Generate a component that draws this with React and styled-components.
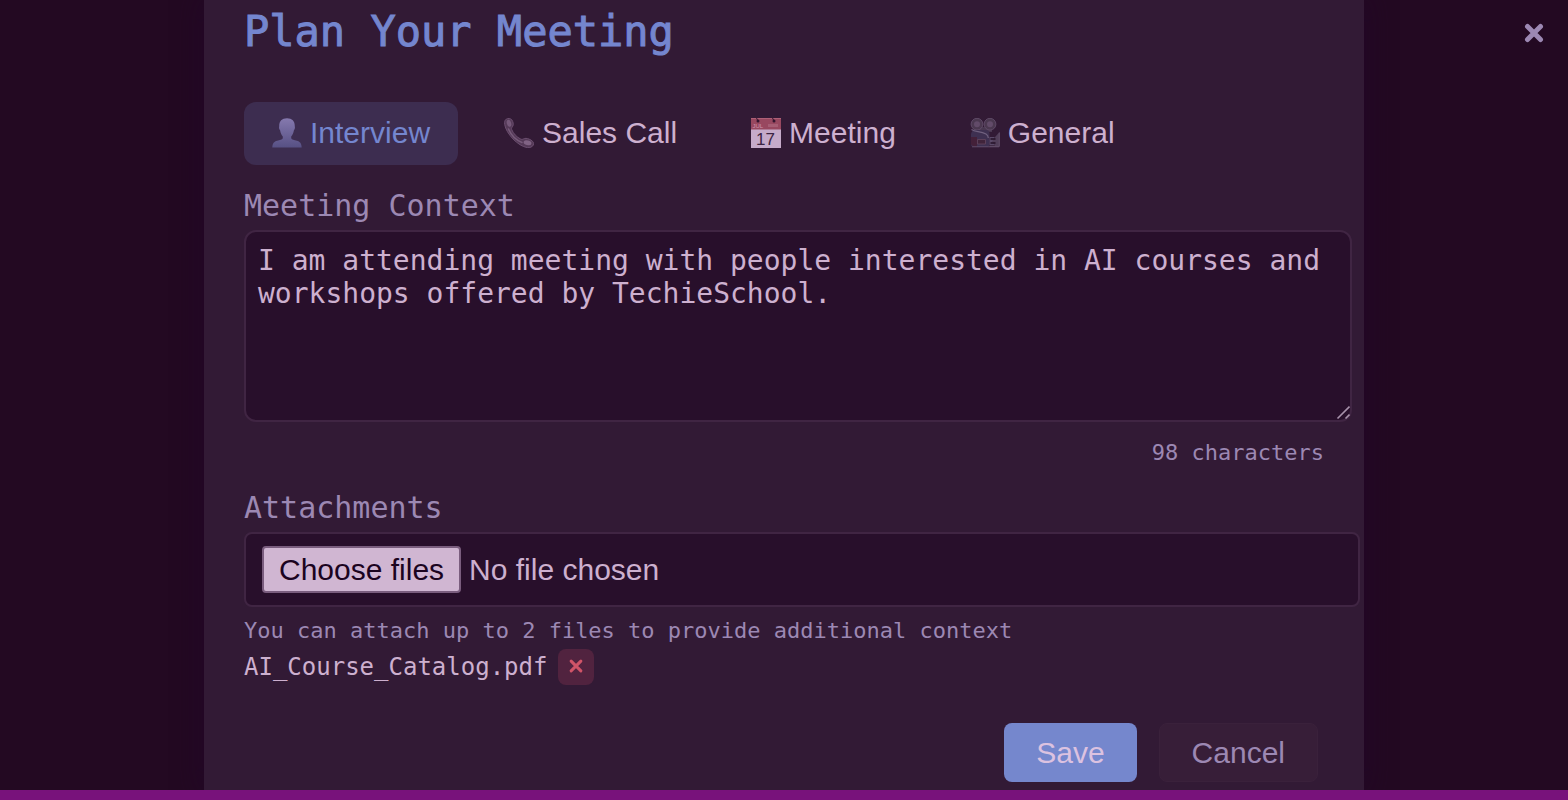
import React, { useState } from 'react';
import styled, { createGlobalStyle } from 'styled-components';

const GlobalStyle = createGlobalStyle`
  body {
    margin: 0;
    background: #230922;
  }
`
const Page = styled.div`
  display: flex;
  flex-direction: column;
  min-height: 100vh;
  box-sizing: border-box;
  border-bottom: 10px solid #78127b;
  font-family: "DejaVu Sans Mono", monospace;
  color: #cdb0cf;
`
const Overlay = styled.div`
  flex: 1;
  display: grid;
  grid-template-columns: 1fr minmax(0, 1160px) 1fr;
  overflow: hidden;
  background: #230922;
`
const Modal = styled.main`
  grid-column: 2;
  padding: 0 40px 8px;
  background: #321a35;
  box-shadow: 0 0 24px #220628;
`
const Close = styled.button`
  justify-self: end;
  align-self: start;
  display: flex;
  margin: 21px 22px 0 0;
  padding: 0;
  border: none;
  background: none;
  color: #9c88b3;
  cursor: pointer;
`
const Title = styled.h1`
  margin: 0 0 42px;
  padding-top: 4px;
  font-size: 42px;
  line-height: 56px;
  font-weight: 400;
  color: #7486cf;
  -webkit-text-stroke: 1px #7486cf;
`
const Tabs = styled.div`
  display: flex;
  flex-wrap: wrap;
  gap: 18px;
  margin-bottom: 20px;
`
const Tab = styled.button`
  display: flex;
  align-items: center;
  gap: 8px;
  height: 63px;
  padding: 0 28px 2px;
  border: none;
  border-radius: 12px;
  background: ${props => props.$active ? '#3d2d50' : 'transparent'};
  color: ${props => props.$active ? '#7486cf' : '#cdb0cf'};
  font-family: "Liberation Sans", Arial, sans-serif;
  font-size: 30px;
  cursor: pointer;
`
const Label = styled.label`
  display: block;
  margin-bottom: 3px;
  font-size: 30px;
  line-height: 42px;
  color: #9c88b3;
`
const Context = styled.textarea`
  display: block;
  width: 100%;
  height: 164px;
  padding: 12px;
  border: 2px solid #402543;
  border-radius: 12px;
  outline: none;
  background: #280f2b;
  color: #cdb0cf;
  font-family: "DejaVu Sans Mono", monospace;
  font-size: 28px;
  line-height: 33px;
  resize: vertical;

  &::-webkit-scrollbar {
    width: 16px;
    height: 16px;
  }
  &::-webkit-resizer {
    background: url("data:image/svg+xml,%3Csvg xmlns='http://www.w3.org/2000/svg' width='16' height='16'%3E%3Cpath d='M2.500 13.500l12-12M10.500 13.500l4-4' stroke='%23a892ab' stroke-width='1.600'/%3E%3C/svg%3E") no-repeat;
  }
`
const Count = styled.div`
  margin: 16px 0 19px;
  font-size: 22px;
  line-height: 30px;
  text-align: right;
  color: #9c88b3;
`
const FileField = styled.div`
  position: relative;
  display: flex;
  align-items: center;
  gap: 8px;
  width: 100%;
  height: 47px;
  padding: 12px 16px;
  border: 2px solid #402543;
  border-radius: 8px;
  background: #280f2b;
  font-family: "Liberation Sans", Arial, sans-serif;
  font-size: 30px;
`
const FileInput = styled.input`
  position: absolute;
  inset: 0;
  width: 100%;
  opacity: 0;
  cursor: pointer;
`
const Choose = styled.span`
  padding: 0 15px;
  border: 2px solid #7a5d7e;
  border-radius: 4px;
  background: #d0b6d2;
  color: #1b041f;
  line-height: 43px;
`
const Hint = styled.p`
  margin: 9px 0 3px;
  font-size: 22px;
  line-height: 30px;
  color: #9c88b3;
`
const FileRow = styled.div`
  display: flex;
  align-items: center;
  gap: 11px;
  height: 36px;
  font-size: 24px;
`
const Remove = styled.button`
  display: flex;
  align-items: center;
  justify-content: center;
  width: 36px;
  height: 36px;
  padding: 0 0 2px;
  border: none;
  border-radius: 8px;
  background: #51233f;
  color: #d05468;
  cursor: pointer;
`
const Actions = styled.div`
  display: flex;
  justify-content: flex-end;
  gap: 22px;
  margin-top: 38px;
  padding-right: 6px;
`
const Button = styled.button`
  height: 59px;
  padding: 0 32px;
  border: ${props => props.$primary ? 'none' : '1px solid #3a213b'};
  border-radius: 8px;
  background: ${props => props.$primary ? '#7587cd' : '#371e38'};
  color: ${props => props.$primary ? '#dcc2e0' : '#9c88b3'};
  font-family: "Liberation Sans", Arial, sans-serif;
  font-size: 30px;
  cursor: pointer;
`

const Cross = ({size, width}) => (
    <svg width={size} height={size} viewBox="0 0 24 24" fill="none" stroke="currentColor" strokeWidth={width} strokeLinecap="round" aria-hidden="true">
        <path d="M5.500 5.500l13 13M18.500 5.500l-13 13"/>
    </svg>
);

const PersonIcon = () => (
    <svg width="30" height="30" viewBox="0 0 30 30" aria-hidden="true">
        <defs>
            <linearGradient id="person" x1="0" y1="0" x2="0" y2="1">
                <stop offset="0" stopColor="#8579ae"/>
                <stop offset="1" stopColor="#575084"/>
            </linearGradient>
        </defs>
        <path fill="url(#person)" d="M15 .3c5 0 7.900 2.900 7.800 8 .4 1.500 0 3.400-.9 4-.5 2.700-1.300 4.700-2.700 6.200v1.700c.5 1.500 3 1.900 5.600 2.600 3.200.9 4.700 2.500 4.900 6.700H.3c.2-4.200 1.700-5.800 4.900-6.700 2.600-.7 5.100-1.100 5.600-2.600v-1.700c-1.400-1.500-2.200-3.500-2.700-6.200-.9-.6-1.300-2.500-.9-4C7.100 3.200 10 .3 15 .3z"/>
    </svg>
);

const PhoneIcon = () => (
    <svg width="30" height="30" viewBox="0 0 30 30" aria-hidden="true">
        <path fill="#553a58" stroke="#6c4f70" strokeWidth="1" d="M2.200 1.200C4 0 6.500.2 7.900 2c1.200 1.700 1.900 4.500.8 6.300-.7 1.200-1.500 1.700-1 3.200 1.400 3.800 5 7.700 9.200 9.700 1.500.6 2.300-.3 3.600-.7 1.900-.5 4.300.3 6.500 1.600 2.300 1.400 3.100 3 2.300 4.900-.9 2-3.500 2.900-6 2.600C14 28.300 2 15.500.7 6.500.4 4 .7 2.200 2.200 1.200z"/>
        <path fill="none" stroke="#775b7a" strokeWidth="1.500" strokeLinecap="round" d="M4.500 11c2.300 5.500 7.500 11 13.500 13.500"/>
        <ellipse cx="5" cy="5.200" rx="2.200" ry="3.600" fill="#76597a" transform="rotate(-15 5 5.200)"/>
        <ellipse cx="23.500" cy="24.800" rx="4" ry="2.300" fill="#806384" transform="rotate(15 23.500 24.800)"/>
    </svg>
);

const CalendarIcon = () => (
    <svg width="30" height="30" viewBox="0 0 30 30" aria-hidden="true">
        <path fill="#c6abca" d="M0 11h30v19H0z"/>
        <path fill="#984860" d="M0 0h30v11.500H0z"/>
        <path stroke="#ae6077" strokeWidth="1" d="M0 .5h30"/>
        <circle cx="7" cy="3" r="1.500" fill="#34152f"/>
        <circle cx="23" cy="3" r="1.500" fill="#34152f"/>
        <path stroke="#34152f" strokeWidth="1" d="M7 3L5.500 0M23 3l-1.500-3"/>
        <path stroke="#a65d74" strokeWidth="3" d="M17 7.500h10"/>
        <text x="1.500" y="10.300" fontFamily="Liberation Sans, sans-serif" fontSize="6" fontWeight="400" fill="#cf94ac">JUL</text>
        <text x="14.500" y="27" textAnchor="middle" fontFamily="Liberation Sans, sans-serif" fontSize="17" fontWeight="400" fill="#3c2443">17</text>
    </svg>
);

const CameraIcon = () => (
    <svg width="30" height="30" viewBox="0 0 30 30" aria-hidden="true">
        <path fill="#493750" d="M4 9h18v5H4z"/>
        <circle cx="7" cy="6.200" r="5.900" fill="#4b3850" stroke="#66506e" strokeWidth=".8"/>
        <circle cx="20" cy="6.200" r="5.900" fill="#4b3850" stroke="#66506e" strokeWidth=".8"/>
        <circle cx="7" cy="6.200" r="3" fill="#624b69"/>
        <circle cx="20" cy="6.200" r="3" fill="#624b69"/>
        <path fill="#3e3051" d="M1 16c.5-2.500 2-4 4-4h11c2 0 3.500 1.500 3.500 3.500v11c0 1.200-.8 2.500-2 2.500H3.500c-1.500 0-2.500-1-2.500-2.500z"/>
        <path fill="#432039" d="M1 19h6v9.500H3.500L1 26.500z"/>
        <path fill="#40243b" stroke="#60435c" strokeWidth=".9" d="M7.500 21.500h8v4.500h-8z"/>
        <path fill="none" stroke="#70617f" strokeWidth="1.200" d="M1.500 11.500c4 3 9 1 14.500 4.500 1.500 1 2.300 2.500 2.300 4"/>
        <path fill="#5b4a69" d="M19.500 19h5v8h-5z"/>
        <path fill="#513e59" d="M29.500 14v15H19.500v-1.500h5.500l-3-4 3.500-5z"/>
        <path stroke="#251027" strokeWidth="1.300" d="M20.500 21h5M20.500 25h5"/>
        <path stroke="#6a5671" strokeWidth=".8" d="M2 28.800h27M29.300 14.500v14"/>
    </svg>
);

const types = [
  {name: 'Interview', Icon: PersonIcon},
  {name: 'Sales Call', Icon: PhoneIcon},
  {name: 'Meeting', Icon: CalendarIcon},
  {name: 'General', Icon: CameraIcon},
];

const App = () => {
  const [type, setType] = useState('Interview');
  const [context, setContext] = useState('I am attending meeting with people interested in AI courses and workshops offered by TechieSchool.');
  const [files, setFiles] = useState(['AI_Course_Catalog.pdf']);

  return (
      <Page>
        <GlobalStyle/>
        <Overlay>
          <Modal>
            <Title>Plan Your Meeting</Title>
            <Tabs>
              {types.map(({name, Icon}) => (
                  <Tab key={name} type="button" $active={name === type} onClick={() => setType(name)}>
                    <Icon/>
                    {name}
                  </Tab>
              ))}
            </Tabs>
            <Label htmlFor="context">Meeting Context</Label>
            <Context id="context" spellCheck={false} value={context} onChange={e => setContext(e.target.value)}/>
            <Count>{context.length} characters</Count>
            <Label htmlFor="files">Attachments</Label>
            <FileField>
              <Choose>Choose files</Choose>
              <span>No file chosen</span>
              <FileInput id="files" type="file" multiple/>
            </FileField>
            <Hint>You can attach up to 2 files to provide additional context</Hint>
            {files.map(file => (
                <FileRow key={file}>
                  <span>{file}</span>
                  <Remove type="button" aria-label={`Remove ${file}`} onClick={() => setFiles(files.filter(f => f !== file))}>
                    <Cross size={18} width={4}/>
                  </Remove>
                </FileRow>
            ))}
            <Actions>
              <Button type="button" $primary>Save</Button>
              <Button type="button">Cancel</Button>
            </Actions>
          </Modal>
          <Close type="button" aria-label="Close"><Cross size={24} width={5}/></Close>
        </Overlay>
      </Page>
  );
};

export default App;
